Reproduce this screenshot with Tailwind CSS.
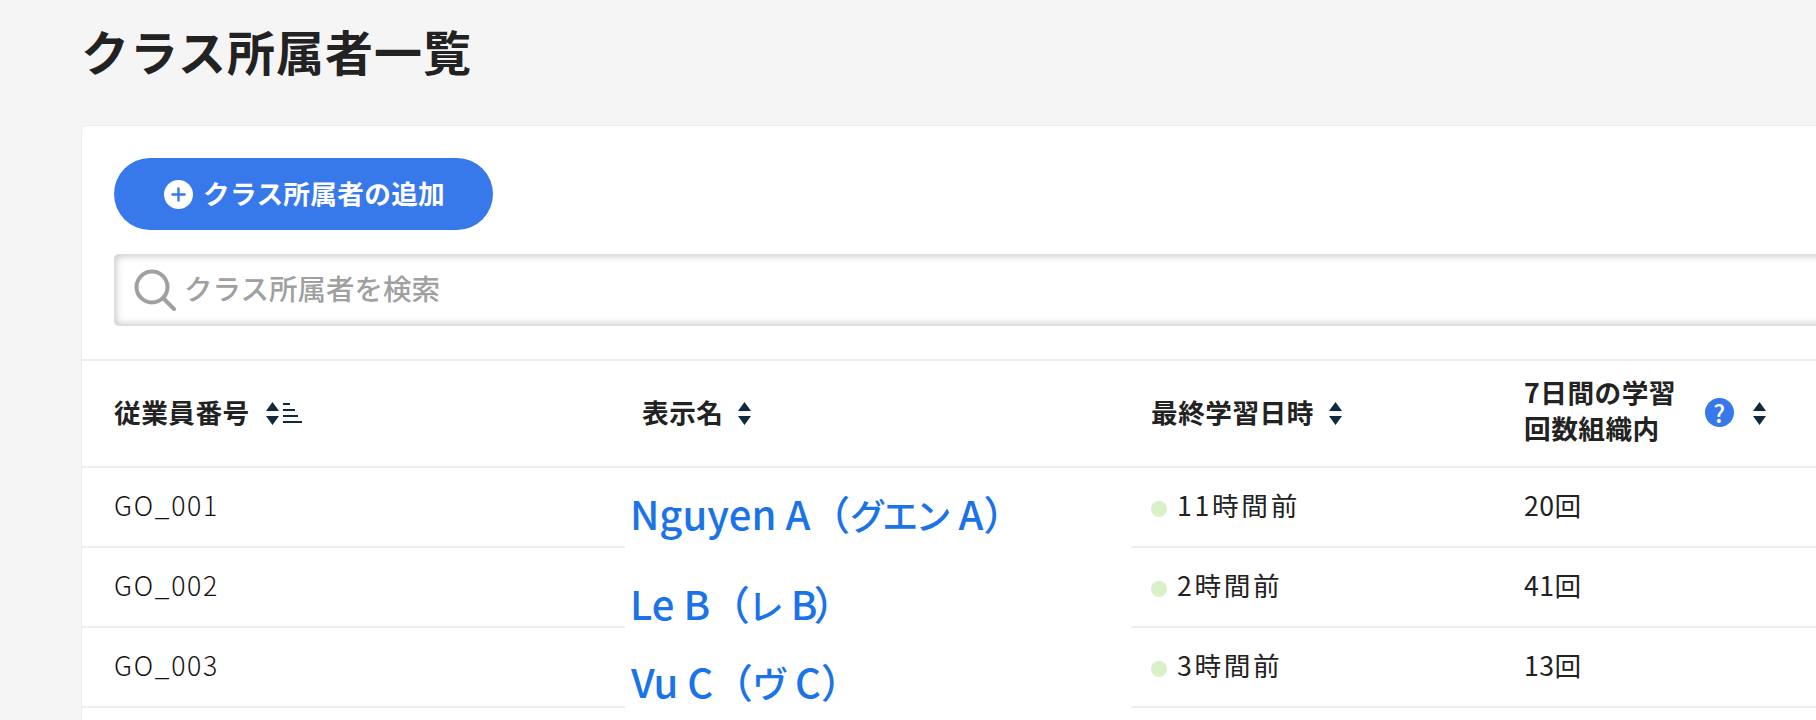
<!DOCTYPE html>
<html lang="ja">
<head>
  <meta charset="UTF-8" />
  <title>クラス所属者一覧</title>
  <script src="https://cdn.jsdelivr.net/npm/@tailwindcss/browser@4"></script>
</head>
<body class="bg-[#f5f5f5] font-['Noto_Sans_CJK_JP',sans-serif] text-[#222] overflow-hidden h-[720px]">
  <div class="pl-[81px]">
    <h1 class="h-[125px] pt-[18px] text-[48px] leading-[64px] font-bold tracking-[1px]">クラス所属者一覧</h1>

    <div class="w-[1800px] bg-white border border-[#eee] rounded-md">
      <!-- ボタンと検索 -->
      <div class="px-[32px] pt-[32px] pb-[33px]">
        <button class="w-[379px] h-[72px] rounded-full bg-[#3778ea] text-white text-[26.67px] font-bold tracking-[0.3px] flex items-center pl-[50px] gap-[10px]">
          <svg class="w-[29px] h-[29px]" viewBox="0 0 29 29"><circle cx="14.5" cy="14.5" r="14.5" fill="#fff"/><path d="M14.5 7.5v14M7.5 14.5h14" stroke="#3778ea" stroke-width="2.4"/></svg>
          <span class="pb-[2px]">クラス所属者の追加</span>
        </button>
        <div class="mt-[24px] h-[72px] flex items-center rounded-[4px] border border-[#ddd] bg-white shadow-[inset_0_0_8px_rgba(0,0,0,0.28)] pl-[19px]">
          <svg class="w-[42px] h-[42px]" viewBox="0 0 42 42" fill="none" stroke="#a0a0a0" stroke-width="4" stroke-linecap="round"><circle cx="18" cy="18" r="15.5"/><path d="M30 30l10 10"/></svg>
          <input class="ml-[8px] flex-1 outline-none bg-transparent text-[28.5px] font-medium placeholder:text-[#a0a0a0] -mt-[3px]" placeholder="クラス所属者を検索" />
        </div>
      </div>

      <!-- ヘッダー -->
      <div class="grid grid-cols-[543px_506px_393px_1fr] h-[109px] pb-[2px] border-y-2 border-[#eee] items-center text-[26.67px] font-bold tracking-[0.5px] leading-[36px]">
        <div class="pl-[32px] flex items-center gap-[16px]">
          <span class="mb-[2px]">従業員番号</span>
          <span class="flex items-center gap-[4px]">
            <svg class="w-[13px] h-[24px]" viewBox="0 0 13 24" fill="#0f2a3c"><path d="M6.5 1l6.5 9H0zM6.5 24l6.5-9H0z"/></svg>
            <svg class="w-[19px] h-[22px]" viewBox="0 0 19 22" stroke="#0f2a3c" stroke-width="2"><path d="M0 2h7M0 8h12M0 14h15M0 20h19"/></svg>
          </span>
        </div>
        <div class="pl-[17px] flex items-center gap-[15px]">
          <span class="mb-[2px]">表示名</span>
          <svg class="w-[13px] h-[24px]" viewBox="0 0 13 24" fill="#0f2a3c"><path d="M6.5 1l6.5 9H0zM6.5 24l6.5-9H0z"/></svg>
        </div>
        <div class="pl-[20px] flex items-center gap-[15px]">
          <span class="mb-[2px]">最終学習日時</span>
          <svg class="w-[13px] h-[24px]" viewBox="0 0 13 24" fill="#0f2a3c"><path d="M6.5 1l6.5 9H0zM6.5 24l6.5-9H0z"/></svg>
        </div>
        <div class="flex items-center">
          <span class="w-[181px] mb-[5px]">7日間の学習<br />回数組織内</span>
          <span class="w-[29px] h-[29px] rounded-full bg-[#3778ea] text-white text-[24px] font-medium leading-[29px] text-center">?</span>
          <svg class="ml-[19px] w-[13px] h-[24px]" viewBox="0 0 13 24" fill="#0f2a3c"><path d="M6.5 1l6.5 9H0zM6.5 24l6.5-9H0z"/></svg>
        </div>
      </div>

      <!-- 行 -->
      <div class="grid grid-cols-[543px_506px_393px_1fr] h-[80px] border-b-2 border-[#eee] items-center text-[26.67px]">
        <div class="pl-[32px] pb-[5px] font-light text-[#111] tracking-[1.7px]">GO_001</div>
        <div class="self-stretch -mb-[2px] bg-white pl-[5px] pt-[10px] flex items-center text-[40px] leading-[40px] font-medium text-[#1a73e8]"><span>Nguyen A（<span class="[font-feature-settings:'palt'] text-[36px]">グエン</span> A）</span></div>
        <div class="pl-[20px] pb-[5px] flex items-center gap-[10px] tracking-[2.7px]"><span class="w-[16px] h-[16px] rounded-full bg-[#d9f0c8] mt-[9px]"></span>11時間前</div>
        <div class="pb-[5px] tracking-[0.4px]">20回</div>
      </div>
      <div class="grid grid-cols-[543px_506px_393px_1fr] h-[80px] border-b-2 border-[#eee] items-center text-[26.67px]">
        <div class="pl-[32px] pb-[5px] font-light text-[#111] tracking-[1.7px]">GO_002</div>
        <div class="self-stretch -mb-[2px] bg-white pl-[5px] pt-[30px] flex items-center text-[40px] leading-[40px] font-medium text-[#1a73e8]"><span>Le B（<span class="[font-feature-settings:'palt'] text-[36px]">レ</span> <span class="tracking-[-4px]">B</span>）</span></div>
        <div class="pl-[20px] pb-[5px] flex items-center gap-[10px] tracking-[2.6px]"><span class="w-[16px] h-[16px] rounded-full bg-[#d9f0c8] mt-[9px]"></span>2時間前</div>
        <div class="pb-[5px] tracking-[0.4px]">41回</div>
      </div>
      <div class="grid grid-cols-[543px_506px_393px_1fr] h-[80px] border-b-2 border-[#eee] items-center text-[26.67px]">
        <div class="pl-[32px] pb-[5px] font-light text-[#111] tracking-[1.7px]">GO_003</div>
        <div class="self-stretch -mb-[2px] bg-white pl-[6px] pt-[26px] flex items-center text-[40px] leading-[40px] font-medium text-[#1a73e8]"><span>Vu C（<span class="[font-feature-settings:'palt'] text-[36px]">ヴ</span> C）</span></div>
        <div class="pl-[20px] pb-[5px] flex items-center gap-[10px] tracking-[2.6px]"><span class="w-[16px] h-[16px] rounded-full bg-[#d9f0c8] mt-[9px]"></span>3時間前</div>
        <div class="pb-[5px] tracking-[0.4px]">13回</div>
      </div>
      <div class="h-[40px]"></div>
    </div>
  </div>
</body>
</html>
